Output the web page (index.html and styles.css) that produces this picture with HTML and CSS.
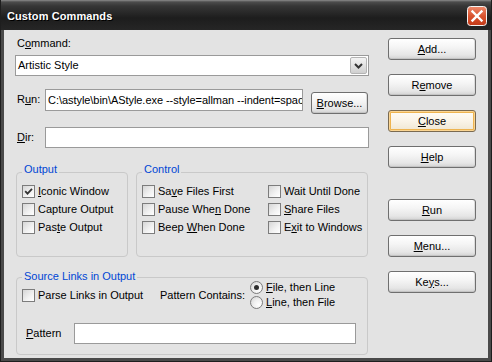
FILE: index.html
```html
<!DOCTYPE html>
<html>
<head>
<meta charset="utf-8">
<link rel="stylesheet" href="styles.css">
</head>
<body>
<div class="window">
  <div class="titlebar">
    <span class="title">Custom Commands</span>
    <span class="close-x">
      <svg width="20" height="20" viewBox="0 0 20 20">
        <defs>
          <linearGradient id="rg" x1="0" y1="0" x2="0" y2="1">
            <stop offset="0" stop-color="#ef8a6c"/>
            <stop offset="0.5" stop-color="#d9532f"/>
            <stop offset="1" stop-color="#c33a18"/>
          </linearGradient>
        </defs>
        <rect x="0.5" y="0.5" width="19" height="19" rx="3" fill="url(#rg)" stroke="#f4f4f4"/>
        <path d="M5.5 5.5 L14.5 14.5 M14.5 5.5 L5.5 14.5" stroke="#fff" stroke-width="2.4" stroke-linecap="square"/>
      </svg>
    </span>
  </div>
  <div class="frame">
    <div class="client">
      <div class="main">
        <div class="cmd-label">C<u>o</u>mmand:</div>
        <div class="combo">
          <span class="combo-text">Artistic Style</span>
          <span class="combo-btn">
            <svg width="15" height="15" viewBox="0 0 15 15"><path d="M4 6 L7.5 9.5 L11 6" fill="none" stroke="#333" stroke-width="2"/></svg>
          </span>
        </div>
        <div class="row run-row">
          <span class="row-label">R<u>u</u>n:</span>
          <div class="input run-input"><span class="run-text">C:\astyle\bin\AStyle.exe --style=allman --indent=spac</span></div>
          <div class="btn browse"><u>B</u>rowse...</div>
        </div>
        <div class="row dir-row">
          <span class="row-label"><u>D</u>ir:</span>
          <div class="input dir-input"></div>
        </div>
        <div class="groups">
          <div class="group output">
            <div class="group-title">Output</div>
            <div class="checks">
              <div class="check"><span class="cb checked"><svg width="11" height="11" viewBox="0 0 11 11"><path d="M2.2 5.2 L4.5 7.6 L9 2.8" fill="none" stroke="#333" stroke-width="1.8"/></svg></span><span><u>I</u>conic Window</span></div>
              <div class="check"><span class="cb"></span><span>Capture Output</span></div>
              <div class="check"><span class="cb"></span><span>Pas<u>t</u>e Output</span></div>
            </div>
          </div>
          <div class="group control">
            <div class="group-title">Control</div>
            <div class="checks grid">
              <div class="check"><span class="cb"></span><span>Sa<u>v</u>e Files First</span></div>
              <div class="check"><span class="cb"></span><span>Wait Until Done</span></div>
              <div class="check"><span class="cb"></span><span>Pause Whe<u>n</u> Done</span></div>
              <div class="check"><span class="cb"></span><span><u>S</u>hare Files</span></div>
              <div class="check"><span class="cb"></span><span>Beep <u>W</u>hen Done</span></div>
              <div class="check"><span class="cb"></span><span>E<u>x</u>it to Windows</span></div>
            </div>
          </div>
        </div>
        <div class="group source">
          <div class="group-title">Source Links in Output</div>
          <div class="src-row">
            <div class="check parse"><span class="cb"></span><span>Parse Links in Output</span></div>
            <span class="pc-label">Pattern Contains:</span>
            <div class="radios">
              <div class="radio-item"><span class="rb on"></span><span><u>F</u>ile, then Line</span></div>
              <div class="radio-item"><span class="rb"></span><span><u>L</u>ine, then File</span></div>
            </div>
          </div>
          <div class="row pattern-row">
            <span class="pat-label"><u>P</u>attern</span>
            <div class="input pat-input"></div>
          </div>
        </div>
      </div>
      <div class="side">
        <div class="btn"><u>A</u>dd...</div>
        <div class="btn">R<u>e</u>move</div>
        <div class="btn default"><u>C</u>lose</div>
        <div class="btn"><u>H</u>elp</div>
        <div class="btn gap-top"><u>R</u>un</div>
        <div class="btn"><u>M</u>enu...</div>
        <div class="btn">Ke<u>y</u>s...</div>
      </div>
    </div>
  </div>
</div>
</body>
</html>
```

FILE: styles.css
```css
* { box-sizing: border-box; }
body {
  margin: 0;
  font-family: "Liberation Sans", Arial, sans-serif;
  font-size: 11px;
  color: #000;
  background: #3a3a3a;
}
u { text-decoration: underline; text-underline-offset: 1px; }

.window {
  width: 492px;
  height: 362px;
  display: flex;
  flex-direction: column;
  border: 1px solid #1e1e1e;
  border-top: none;
  overflow: hidden;
}
.titlebar {
  height: 30px;
  flex: none;
  display: flex;
  align-items: flex-start;
  padding-left: 6px;
  background: linear-gradient(to bottom, #8c8c8c 0, #4c4c4c 2px, #363636 6px, #1d1d1d 60%, #262626 100%);
}
.title {
  margin-top: 10px;
  line-height: 13px;
  font-weight: bold;
  font-size: 11px;
  color: #fff;
  text-shadow: 1px 1px 0 #000;
  letter-spacing: 0.1px;
}
.close-x {
  margin-left: auto;
  margin-right: 4px;
  margin-top: 6px;
  width: 20px;
  height: 20px;
  display: block;
}
.close-x svg { display: block; }

.frame {
  flex: 1;
  border: 3px solid #4a4a4a;
  border-top: none;
  display: flex;
}
.client {
  flex: 1;
  background: #e3e3e3;
  display: flex;
  padding-left: 11px;
}
.main {
  width: 354px;
  display: flex;
  flex-direction: column;
}
.cmd-label {
  margin-top: 7px;
  padding-left: 2px;
  height: 13px;
  line-height: 13px;
}
.combo {
  margin-top: 5px;
  height: 21px;
  border: 1px solid #9a9a9a;
  background: #fff;
  display: flex;
  align-items: center;
  padding: 0 1px 0 2px;
}
.combo-text { flex: 1; line-height: 13px; }
.combo-btn {
  width: 17px;
  height: 17px;
  border: 1px solid #b4b4b4;
  border-radius: 2px;
  background: linear-gradient(to bottom, #f4f4f4, #dedede 60%, #cfcfcf);
  display: flex;
  align-items: center;
  justify-content: center;
}
.combo-btn svg { display: block; }

.row { display: flex; align-items: center; }
.row-label {
  width: 30px;
  padding-left: 2px;
  line-height: 13px;
}
.input {
  background: #fff;
  border: 1px solid #9a9a9a;
  padding-left: 2px;
  line-height: 18px;
  white-space: nowrap;
  overflow: hidden;
}
.run-row { margin-top: 13px; height: 22px; align-items: flex-start; }
.run-row .row-label { margin-top: 4px; }
.run-input { width: 258px; height: 22px; line-height: 20px; }
.run-text { letter-spacing: -0.05px; }
.browse {
  margin-left: 8px;
  margin-top: 3px;
  width: 57px;
  height: 21px;
}
.dir-row { margin-top: 16px; height: 21px; }
.dir-input { width: 324px; height: 21px; }

.groups {
  margin-top: 24px;
  display: flex;
  gap: 8px;
  padding-left: 1px;
}
.group {
  border: 1px solid #c9c9c9;
  border-radius: 4px;
  padding-left: 5px;
}
.group-title {
  margin-top: -10px;
  margin-left: 0;
  padding: 0 2px;
  width: fit-content;
  height: 13px;
  line-height: 13px;
  background: #e3e3e3;
  color: #0046d5;
}
.output { width: 112px; height: 85px; }
.control { width: 232px; height: 85px; }
.checks {
  margin-top: 9px;
  display: flex;
  flex-direction: column;
  row-gap: 5px;
}
.checks.grid {
  display: grid;
  grid-template-columns: 126px auto;
  row-gap: 5px;
  column-gap: 0;
}
.check {
  display: flex;
  align-items: center;
  gap: 3px;
  height: 13px;
  line-height: 13px;
  white-space: nowrap;
}
.cb {
  width: 13px;
  height: 13px;
  flex: none;
  border: 1px solid #7c7c7c;
  background: linear-gradient(135deg, #d6d6d6 0%, #f2f2f2 60%, #ffffff 100%);
  display: block;
}
.cb svg { display: block; }

.source {
  margin-top: 20px;
  margin-left: 1px;
  width: 352px;
  height: 78px;
}
.source .group-title { margin-top: -8px; }
.src-row {
  margin-top: -2px;
  height: 28px;
  display: flex;
  align-items: center;
}
.parse { width: 138px; }
.pc-label { width: 90px; line-height: 13px; }
.radios {
  display: flex;
  flex-direction: column;
  gap: 2px;
}
.radio-item {
  display: flex;
  align-items: center;
  gap: 3px;
  height: 13px;
  line-height: 13px;
}
.rb {
  width: 13px;
  height: 13px;
  border-radius: 50%;
  border: 1px solid #7c7c7c;
  background: radial-gradient(circle at 70% 70%, #ffffff 0%, #f0f0f0 45%, #d0d0d0 100%);
  display: flex;
  align-items: center;
  justify-content: center;
}
.rb.on::after {
  content: "";
  width: 5px;
  height: 5px;
  border-radius: 50%;
  background: #2e2e2e;
}
.pattern-row { margin-top: 14px; height: 21px; }
.pat-label { width: 52px; padding-left: 4px; line-height: 13px; }
.pat-input { width: 282px; height: 21px; }

.side {
  margin-left: 19px;
  width: 88px;
  padding-top: 8px;
  display: flex;
  flex-direction: column;
  gap: 14px;
}
.btn {
  height: 22px;
  border: 1px solid #6f6f6f;
  border-radius: 3px;
  background: linear-gradient(to bottom, #ffffff 0%, #f5f5f5 40%, #e6e6e6 80%, #d2d2d2 100%);
  box-shadow: inset 0 -1px 0 #c4c4c4, inset -1px 0 0 #dcdcdc;
  display: flex;
  align-items: center;
  justify-content: center;
  line-height: 13px;
  white-space: nowrap;
}
.btn.default {
  background: linear-gradient(to bottom, #fffdf7 0%, #faf4e8 50%, #efe6d2 100%);
  box-shadow: inset 0 0 0 1px #fbd592, inset 0 0 0 2px #eeb450;
  border-color: #7a6a50;
}
.btn.gap-top { margin-top: 17px; }
```
